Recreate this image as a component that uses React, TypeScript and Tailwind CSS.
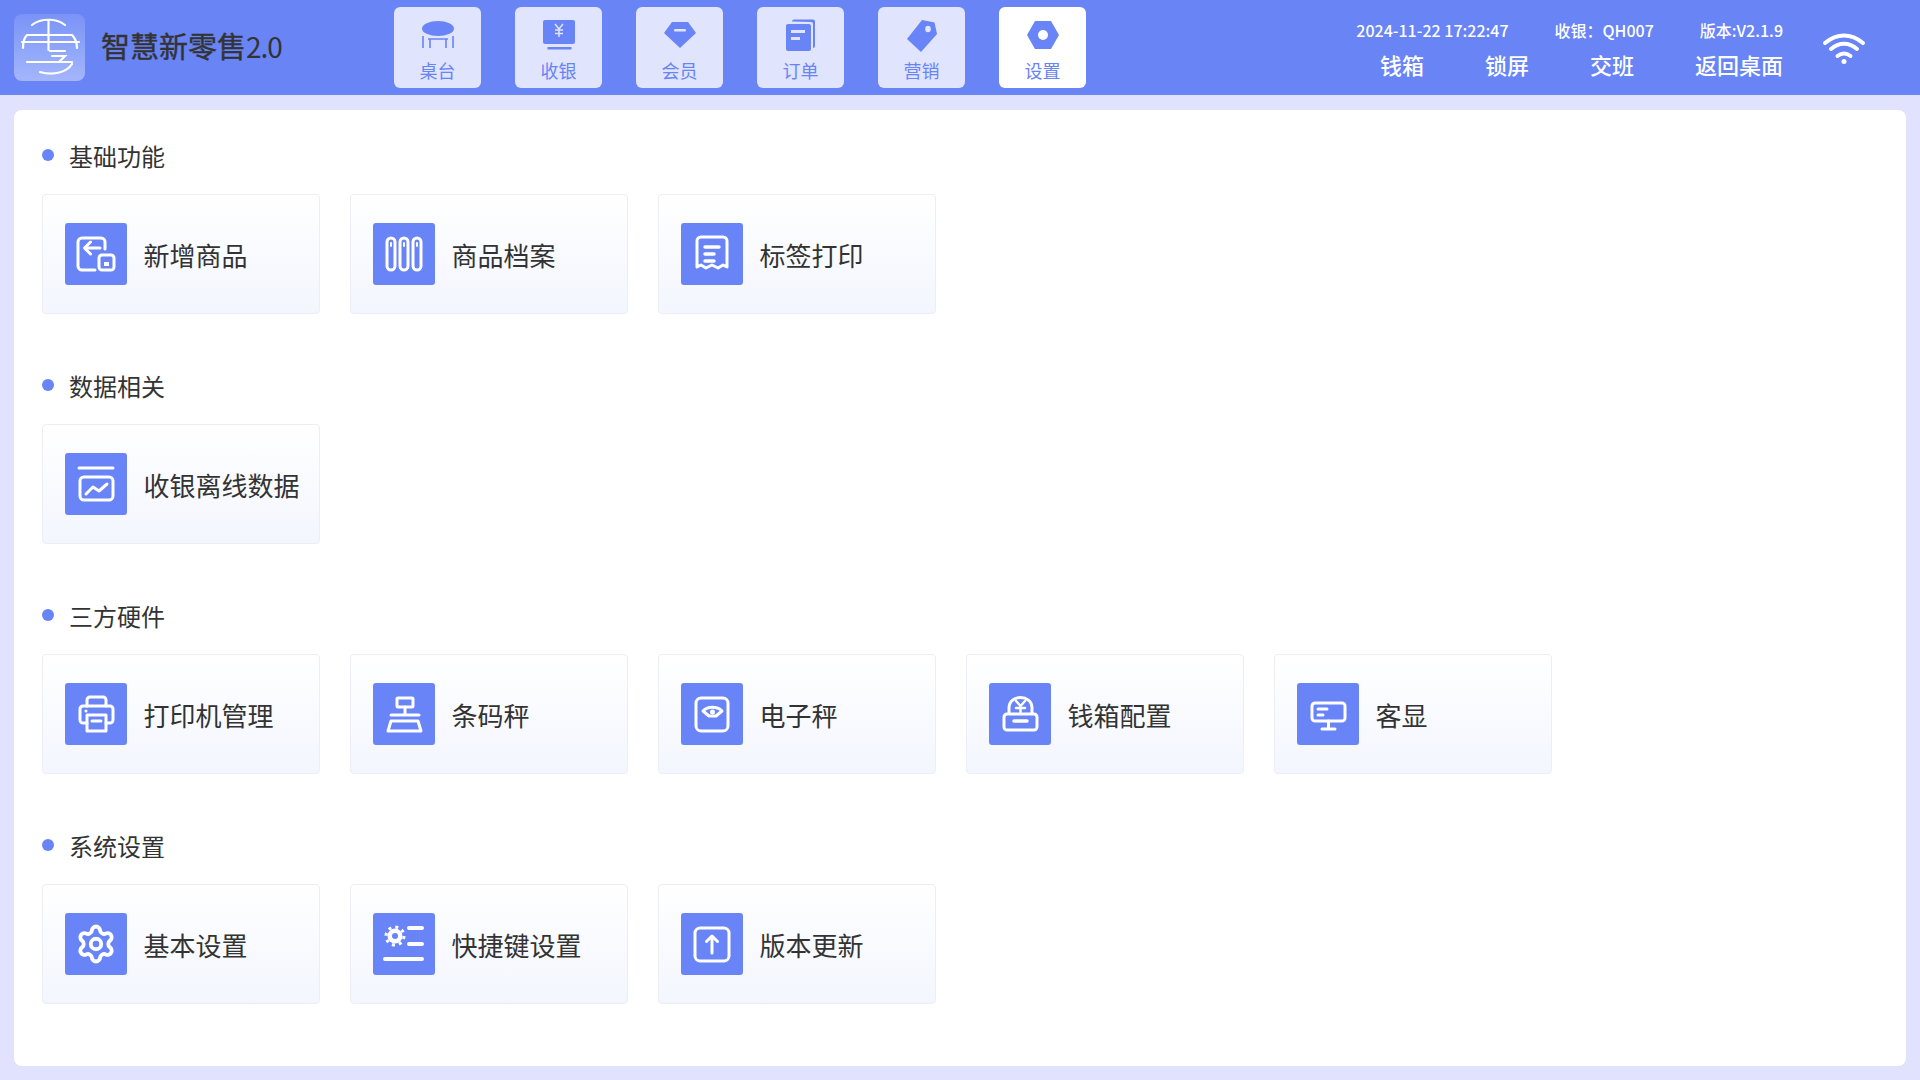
import type { ReactNode } from "react";
import { Settings } from "lucide-react";

const FONT = "font-['Noto_Sans_CJK_SC','Noto_Sans',sans-serif]";

function Ico({ children }: { children: ReactNode }) {
  return (
    <svg viewBox="0 0 62 62" className="w-[62px] h-[62px]" fill="none" stroke="#fff" strokeWidth="3" strokeLinecap="round" strokeLinejoin="round">
      {children}
    </svg>
  );
}

function NavSvg({ children }: { children: ReactNode }) {
  return (
    <svg viewBox="0 0 36 36" className="w-9 h-9" fill="#6884f6">
      {children}
    </svg>
  );
}

const navItems = [
  {
    label: "桌台",
    icon: (
      <NavSvg>
        <ellipse cx="18" cy="11.5" rx="16" ry="7.5" />
        <path d="M3 19v12M10 22v9M26 22v9M33 19v12M8 22h20" fill="none" stroke="#6884f6" strokeWidth="1.6" />
      </NavSvg>
    ),
  },
  {
    label: "收银",
    icon: (
      <NavSvg>
        <rect x="2" y="3" width="32" height="24" rx="2" />
        <rect x="6.5" y="30" width="24" height="2.5" />
        <path d="M14 7l4 5 4-5M18 12v8M14 13h8M14 16.5h8" fill="none" stroke="#e0e4fc" strokeWidth="1.5" />
      </NavSvg>
    ),
  },
  {
    label: "会员",
    icon: (
      <NavSvg>
        <path d="M10 5h16l8 11-16 15-16-15z" />
        <rect x="12" y="12" width="12" height="2.5" rx="1" fill="#e0e4fc" />
      </NavSvg>
    ),
  },
  {
    label: "订单",
    icon: (
      <NavSvg>
        <path d="M9 4.5a2 2 0 0 1 2-2h19a2 2 0 0 1 2 2V29a2 2 0 0 1-2 2V7a2 2 0 0 0-2-2z" />
        <rect x="3" y="7" width="25" height="27" rx="2" />
        <rect x="8" y="13" width="14" height="3" fill="#e0e4fc" />
        <rect x="8" y="20" width="9" height="3" fill="#e0e4fc" />
      </NavSvg>
    ),
  },
  {
    label: "营销",
    icon: (
      <NavSvg>
        <path d="M18 3l12.5 2.5L33 17 17 35 3 22z" />
        <ellipse cx="24" cy="12" rx="2.8" ry="3.3" fill="#e0e4fc" />
      </NavSvg>
    ),
  },
  {
    label: "设置",
    active: true,
    icon: (
      <NavSvg>
        <path d="M10 4h16l8 14-8 14H10L2 18z" />
        <circle cx="18" cy="18" r="5" fill="#fff" />
      </NavSvg>
    ),
  },
];

const sections = [
  {
    title: "基础功能",
    items: [
      {
        label: "新增商品",
        icon: (
          <Ico>
            <path d="M40 26v-7a4 4 0 0 0-4-4H17a4 4 0 0 0-4 4v24a4 4 0 0 0 4 4h13" />
            <path d="M35 25H20M25.500 19l-6 6 6 6" />
            <rect x="34" y="32" width="15" height="15" rx="3" />
            <rect x="39" y="39" width="5" height="4" fill="#fff" stroke="none" />
          </Ico>
        ),
      },
      {
        label: "商品档案",
        icon: (
          <Ico>
            <rect x="14" y="15" width="8" height="32" rx="4" />
            <rect x="27" y="15" width="8" height="32" rx="4" />
            <rect x="40" y="15" width="8" height="32" rx="4" />
            <path d="M18 20v3M31 20v3M44 20v3" strokeWidth="2" />
          </Ico>
        ),
      },
      {
        label: "标签打印",
        icon: (
          <Ico>
            <path d="M16 44V18a4 4 0 0 1 4-4h22a4 4 0 0 1 4 4v26l-4-2-5 3-6-3-6 3-5-3z" />
            <path d="M24 24h14M24 31h9M24 38h9" strokeWidth="3.500" />
          </Ico>
        ),
      },
    ],
  },
  {
    title: "数据相关",
    items: [
      {
        label: "收银离线数据",
        icon: (
          <Ico>
            <path d="M14 15h34" />
            <rect x="15" y="24" width="33" height="23" rx="4" />
            <path d="M21 41l7-7 6 4 8-7" />
          </Ico>
        ),
      },
    ],
  },
  {
    title: "三方硬件",
    items: [
      {
        label: "打印机管理",
        icon: (
          <Ico>
            <path d="M22 23v-6a3 3 0 0 1 3-3h13a3 3 0 0 1 3 3v6" />
            <path d="M22 40h-4a3 3 0 0 1-3-3V26a3 3 0 0 1 3-3h27a3 3 0 0 1 3 3v11a3 3 0 0 1-3 3h-4" />
            <rect x="22" y="32" width="19" height="16" />
            <path d="M27 38h9" />
            <circle cx="21" cy="28" r="1.500" fill="#fff" stroke="none" />
          </Ico>
        ),
      },
      {
        label: "条码秤",
        icon: (
          <Ico>
            <rect x="24" y="15" width="16" height="9" rx="1" />
            <path d="M32 24v7M18 32h28" />
            <path d="M18 38h27l3 10H15z" />
          </Ico>
        ),
      },
      {
        label: "电子秤",
        icon: (
          <Ico>
            <rect x="15" y="15" width="32" height="33" rx="5" />
            <path d="M22 28c5-5 14-5 19 0l-6 5h-7z" />
            <circle cx="31.500" cy="29" r="2.500" fill="#fff" stroke="none" />
          </Ico>
        ),
      },
      {
        label: "钱箱配置",
        icon: (
          <Ico>
            <path d="M20 30v-5c0-14 23-14 23 0v5" />
            <rect x="15" y="31" width="33" height="16" rx="3" />
            <path d="M25 38h13" strokeWidth="3.500" />
            <path d="M27 18l4.500 5 4.500-5M31.500 23v6M27 25h9" strokeWidth="2.500" />
          </Ico>
        ),
      },
      {
        label: "客显",
        icon: (
          <Ico>
            <rect x="15" y="20" width="33" height="18" rx="3" />
            <path d="M21 26h9M21 32h5M31.500 38v7M25 46h13" />
          </Ico>
        ),
      },
    ],
  },
  {
    title: "系统设置",
    items: [
      {
        label: "基本设置",
        icon: (
          <div className="w-[62px] h-[62px] flex items-center justify-center">
            <Settings size={42} color="#fff" strokeWidth={2.2} />
          </div>
        ),
      },
      {
        label: "快捷键设置",
        icon: (
          <Ico>
            <circle cx="22" cy="23" r="7.500" fill="#fff" stroke="none" />
            <circle cx="22" cy="23" r="9" strokeWidth="3" strokeDasharray="3 4.07" strokeLinecap="butt" />
            <circle cx="22" cy="23" r="3" fill="#6884f6" stroke="none" />
            <path d="M36 15h13M36 31h13M12 46h37" strokeWidth="4" />
          </Ico>
        ),
      },
      {
        label: "版本更新",
        icon: (
          <Ico>
            <rect x="14" y="15" width="34" height="33" rx="5" />
            <path d="M31 40V23M25.500 28.500L31 23l5.500 5.500" />
          </Ico>
        ),
      },
    ],
  },
];

function Logo() {
  return (
    <div className="w-[71px] h-[67px] rounded-lg bg-gradient-to-b from-[#7a93f7] to-[#a3b6fc]">
      <svg viewBox="0 0 71 67" className="w-[71px] h-[67px]" fill="none" stroke="#fff" strokeWidth="2.200" strokeLinecap="round">
        <path d="M18 11c9-7 24-7 33 0" />
        <path d="M34.500 6v30" />
        <path d="M9 34c0-6 1-10 4-13h45c3 3 5 7 5 13" />
        <path d="M8 28h57" />
        <path d="M36 37h15M13 48h45" />
        <path d="M38 42h13l-6 6" />
        <path d="M58 50c-5 8-18 12-32 8" />
      </svg>
    </div>
  );
}

export default function App() {
  return (
    <div className={`w-[1920px] h-[1080px] flex flex-col bg-[#e0e2fe] overflow-hidden ${FONT}`}>
      <header className="h-[95px] shrink-0 bg-[#6884f5] flex items-center">
        <div className="w-[394px] shrink-0 pl-[14px] flex items-center gap-4">
          <Logo />
          <span className="text-[29px] text-[#333] leading-none -translate-y-[2px] [-webkit-text-stroke:0.4px_#333] whitespace-nowrap">
            智慧新零售<span className="text-[28px] tracking-[-1px] [-webkit-text-stroke:0]">2.0</span>
          </span>
        </div>
        <nav className="flex gap-[34px]">
          {navItems.map((n) => (
            <div
              key={n.label}
              className={`w-[87px] h-[81px] rounded-md flex flex-col items-center pt-[10px] ${n.active ? "bg-white" : "bg-[#e0e4fc]"}`}
            >
              {n.icon}
              <span className="mt-[4px] text-[18px] leading-[26px] text-[#6884f6]">{n.label}</span>
            </div>
          ))}
        </nav>
        <div className="ml-auto flex items-center pr-[54px] pt-[2px]">
          <div className="w-[430px] flex flex-col text-white items-end whitespace-nowrap">
            <div className="flex text-[16px] leading-6 font-medium">
              <span>2024-11-22 17:22:47</span>
              <span className="ml-[46px]">收银：QH007</span>
              <span className="ml-[46px]">版本:V2.1.9</span>
            </div>
            <div className="flex text-[22px] leading-8 font-medium mt-[6px]">
              <span>钱箱</span>
              <span className="ml-[61px]">锁屏</span>
              <span className="ml-[61px]">交班</span>
              <span className="ml-[61px]">返回桌面</span>
            </div>
          </div>
          <svg viewBox="0 0 44 32" className="w-11 h-8 ml-[39px] -translate-y-[1px]" fill="none" stroke="#fff" strokeWidth="4" strokeLinecap="round">
            <path d="M3 11c12-10 26-10 38 0" />
            <path d="M9 17c8-7 18-7 26 0" />
            <path d="M15.500 24c4-3 9-3 13 0" />
            <circle cx="22" cy="29.500" r="2.500" fill="#fff" stroke="none" />
          </svg>
        </div>
      </header>

      <main className="flex-1 min-h-0 mx-[14px] mt-[15px] mb-[14px] bg-white rounded-lg px-[28px] pt-[30px] flex flex-col gap-[56px]">
        {sections.map((s) => (
          <section key={s.title}>
            <div className="h-[34px] flex items-center text-[24px] text-[#333]">
              <span className="w-3 h-3 rounded-full bg-[#6884f6] -translate-y-[2px]" />
              <span className="ml-[15px] -translate-y-[1px]">{s.title}</span>
            </div>
            <div className="mt-5 flex gap-[30px]">
              {s.items.map((item) => (
                <div
                  key={item.label}
                  className="w-[278px] h-[120px] border border-[#eceef3] rounded-[4px] bg-gradient-to-b from-white to-[#f3f6fe] flex items-center pl-[22px]"
                >
                  <div className="w-[62px] h-[62px] rounded-[3px] bg-[#6884f6] shrink-0">{item.icon}</div>
                  <span className="ml-[16.5px] text-[26px] text-[#333]">{item.label}</span>
                </div>
              ))}
            </div>
          </section>
        ))}
      </main>
    </div>
  );
}
